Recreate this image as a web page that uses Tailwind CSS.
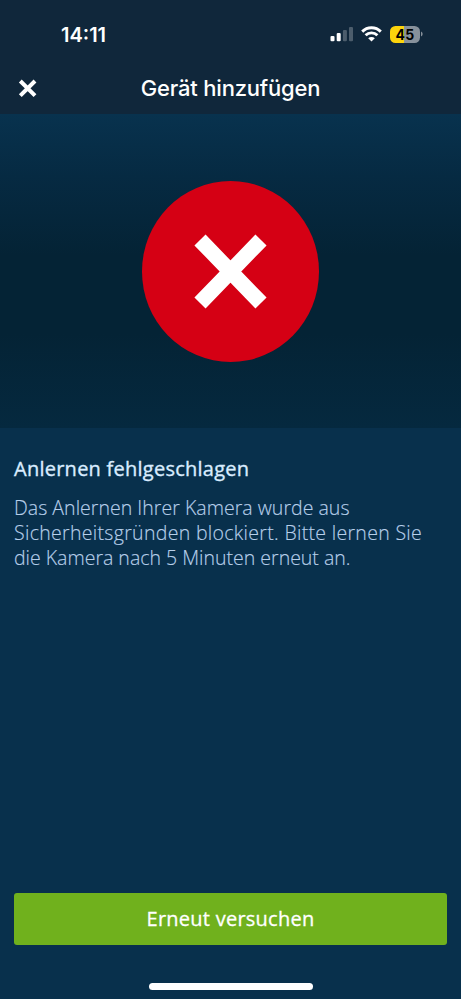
<!DOCTYPE html>
<html lang="de">
<head>
<meta charset="utf-8">
<meta name="viewport" content="width=device-width, initial-scale=1">
<title>Gerät hinzufügen</title>
<script src="https://cdn.jsdelivr.net/npm/@tailwindcss/browser@4"></script>
</head>
<body class="bg-[#08304c]">
<div class="flex h-[999px] w-[461px] flex-col overflow-hidden bg-[#08304c] font-['Open_Sans','Noto_Sans',sans-serif]">
  <header class="h-[114px] shrink-0 bg-[#10273b] font-['Inter',sans-serif] text-white">
    <div class="flex h-[68px] items-center justify-between pr-[38px] pl-[61px]">
      <span class="pt-px text-[20px] leading-6 font-semibold tracking-[0px]">14:11</span>
      <div class="flex items-center">
        <svg class="h-[16px] w-[23px]" viewBox="0 0 23 16" fill="#fff">
          <rect x="0.500" y="10" width="4" height="5.3" rx="1.1"/>
          <rect x="6.700" y="7" width="4" height="8.3" rx="1.1"/>
          <rect x="12.900" y="4" width="4" height="11.3" rx="1.1" opacity=".25"/>
          <rect x="19" y="1" width="4" height="14.3" rx="1.1" opacity=".25"/>
        </svg>
        <svg class="ml-[8px] h-[16px] w-[21px]" viewBox="0 0 21 16" fill="none" stroke="#fff" stroke-width="2.9">
          <path d="M1.200 5.600a13.200 13.200 0 0 1 18.600 0"/>
          <path d="M4.600 9.300a8.300 8.300 0 0 1 11.800 0"/>
          <path d="M10.500 15.600L7.200 12.300a4.600 4.600 0 0 1 6.600 0Z" fill="#fff" stroke="none"/>
        </svg>
        <div class="ml-[8px] flex h-[17px] w-[30px] items-center justify-center rounded-[5.500px] bg-linear-to-r from-[#fcd40c] from-46% to-[#87919b] to-46%">
          <span class="pt-px text-[14px] leading-none font-bold tracking-[0.2px] text-black">45</span>
        </div>
        <svg class="ml-px h-[6px] w-[2px]" viewBox="0 0 2 6"><path d="M0 .5a2.700 2.700 0 0 1 0 5Z" fill="#87919b"/></svg>
      </div>
    </div>
    <div class="grid h-[40px] grid-cols-[60px_1fr_60px] items-center">
      <button class="ml-[18px] h-[20px] w-[20px]" aria-label="Schließen">
        <svg class="block h-[20px] w-[20px]" viewBox="0 0 20 20" stroke="#fff" stroke-width="4"><path d="M2.300 3L17 17.700M17 3L2.300 17.700"/></svg>
      </button>
      <h1 class="text-center text-[22px] leading-7 font-medium tracking-[-0.2px] whitespace-nowrap">Gerät hinzufügen</h1>
    </div>
  </header>
  <section class="flex h-[314px] shrink-0 justify-center bg-[linear-gradient(180deg,#08324e_0%,#062a42_20%,#042335_45%,#042335_70%,#05293f_100%)] pt-[67px]">
    <svg class="h-[181px] w-[177px]" viewBox="0 0 177 181">
      <ellipse cx="88.500" cy="90.500" rx="88.500" ry="90.500" fill="#d50014"/>
      <path d="M58 59L119 122M119 59L58 122" stroke="#fff" stroke-width="15.500"/>
    </svg>
  </section>
  <main class="flex flex-1 flex-col px-[14px] pt-[27px]">
    <h2 class="text-[20px] leading-[27px] tracking-[0.25px] whitespace-nowrap text-[#d9ecff] [-webkit-text-stroke:0.35px_#d9ecff]">Anlernen fehlgeschlagen</h2>
    <p class="mt-[13px] text-[19.500px] leading-[25px] font-light whitespace-nowrap text-[#b7cfea] [-webkit-text-stroke:0.15px_#b7cfea]">
      <span class="block tracking-[0.030px]">Das Anlernen Ihrer Kamera wurde aus</span>
      <span class="block tracking-[0.310px]">Sicherheitsgründen blockiert. Bitte lernen Sie</span>
      <span class="block">die Kamera nach 5 Minuten erneut an.</span>
    </p>
    <button class="mt-auto h-[52px] w-full shrink-0 rounded-[3px] bg-[#70b11d] text-[20px] tracking-[0.250px] text-white [-webkit-text-stroke:0.3px_#fff]">Erneut versuchen</button>
    <div class="mt-[38px] mb-[9px] h-[7px] w-[164px] shrink-0 self-center rounded-full bg-white"></div>
  </main>
</div>
</body>
</html>
